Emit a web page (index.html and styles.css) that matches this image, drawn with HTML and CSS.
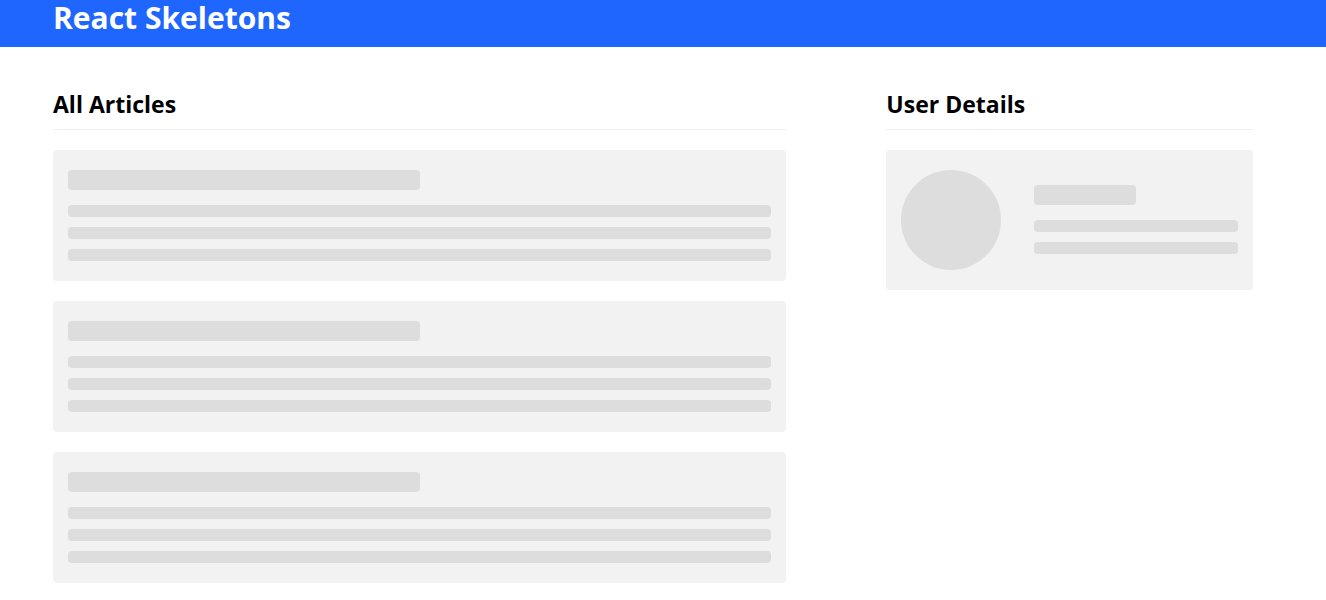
FILE: index.html
```html
<!DOCTYPE html>
<html lang="en">
<head>
<meta charset="utf-8">
<title>React Skeletons</title>
<link rel="stylesheet" href="styles.css">
</head>
<body>
<header class="header"><h1 class="title">React Skeletons</h1></header>
<main class="content">
  <section class="articles">
    <h2 class="heading">All Articles</h2>
    <div class="card"><div class="bar bar-title"></div><div class="bar"></div><div class="bar"></div><div class="bar"></div></div>
    <div class="card"><div class="bar bar-title"></div><div class="bar"></div><div class="bar"></div><div class="bar"></div></div>
    <div class="card"><div class="bar bar-title"></div><div class="bar"></div><div class="bar"></div><div class="bar"></div></div>
  </section>
  <section class="user">
    <h2 class="heading">User Details</h2>
    <div class="card profile">
      <div class="avatar"></div>
      <div class="lines"><div class="bar bar-title"></div><div class="bar"></div><div class="bar"></div></div>
    </div>
  </section>
</main>
</body>
</html>
```

FILE: styles.css
```css
* {
  box-sizing: border-box;
}

body {
  margin: 0;
  background: #fff;
  color: #000;
  font-family: "Open Sans", "Noto Sans", sans-serif;
}

.header {
  padding: 0 4% 11px;
  background: #1f66ff;
  color: #fff;
}

.title {
  margin: 0;
  font-size: 30px;
  line-height: 36px;
}

.content {
  display: grid;
  grid-template-columns: 2fr 1fr;
  column-gap: 100px;
  padding: 40px 73px 0 53px;
}

.heading {
  margin: 0 0 20px;
  padding-bottom: 8px;
  border-bottom: 1px solid #eee;
  font-size: 23px;
  font-weight: 700;
  line-height: 34px;
}

.card {
  margin-bottom: 20px;
  padding: 20px 15px;
  border-radius: 4px;
  background: #f2f2f2;
}

.bar {
  height: 12px;
  margin-top: 10px;
  border-radius: 4px;
  background: #ddd;
}

.bar-title {
  width: 50%;
  height: 20px;
  margin: 0 0 15px;
}

.bar-title + .bar {
  margin-top: 0;
}

.profile {
  display: grid;
  grid-template-columns: 1fr 2fr;
  column-gap: 30px;
}

.lines {
  padding-top: 15px;
}

.avatar {
  width: 100px;
  height: 100px;
  border-radius: 50%;
  background: #ddd;
}
```
